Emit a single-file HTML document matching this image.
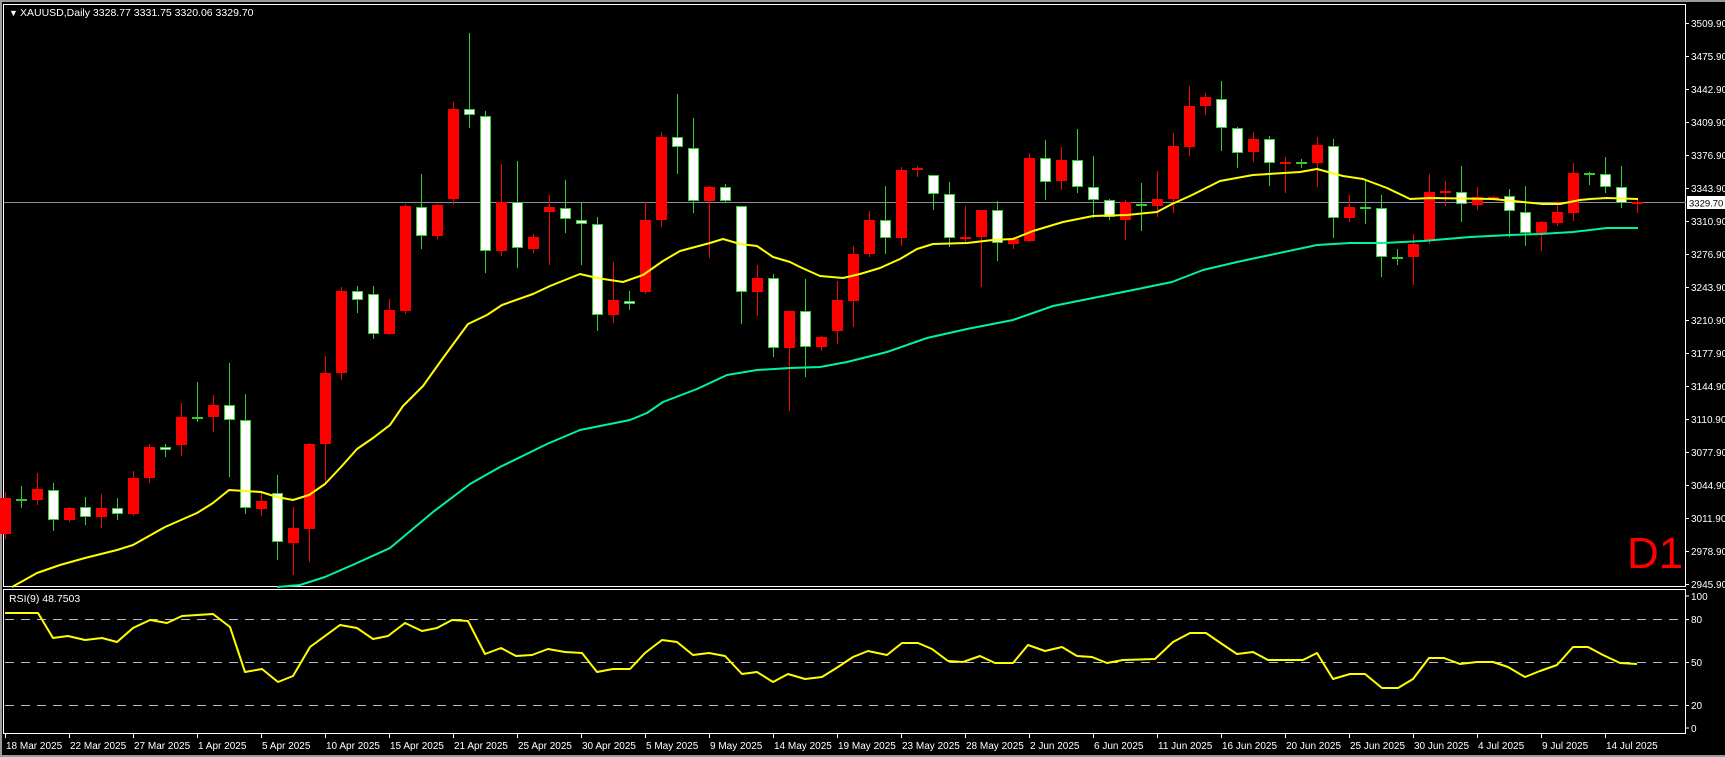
<!DOCTYPE html>
<html><head><meta charset="utf-8"><style>
html,body{margin:0;padding:0;background:#000;width:1725px;height:757px;overflow:hidden}
svg{display:block}
text{font-family:"Liberation Sans",sans-serif;font-size:10px;fill:#fff}
</style></head><body>
<svg id="s" width="1725" height="757" xmlns="http://www.w3.org/2000/svg">
<rect x="0" y="0" width="1725" height="757" fill="#000"/>
<rect x="0" y="0" width="1725" height="2" fill="#9a9a9a"/>
<rect x="0" y="755" width="1725" height="2" fill="#9a9a9a"/>
<rect x="0" y="0" width="2" height="757" fill="#9a9a9a"/>
<rect x="3.5" y="4.5" width="1682" height="582" fill="none" stroke="#fff" stroke-width="1"/>
<rect x="3.5" y="589.5" width="1682" height="144" fill="none" stroke="#fff" stroke-width="1"/>
<line x1="4" y1="202.5" x2="1686" y2="202.5" stroke="#8a8f99" stroke-width="1"/>
<g stroke="#bdbdbd" stroke-width="1" stroke-dasharray="9,7">
<line x1="5" y1="619.5" x2="1685" y2="619.5"/>
<line x1="5" y1="662.5" x2="1685" y2="662.5"/>
<line x1="5" y1="705.5" x2="1685" y2="705.5"/>
</g>
<g id="candles"></g>
<g id="lines"></g>
<text x="9" y="16" style="font-size:9px">&#9660;</text>
<text x="20" y="16" style="font-size:10.5px">XAUUSD,Daily  3328.77 3331.75 3320.06 3329.70</text>
<text x="9" y="602" style="font-size:10.5px">RSI(9) 48.7503</text>
<text x="1627" y="568" style="font-size:44px;fill:#ff0000">D1</text>
<g id="pax"></g>
<rect x="1687" y="196" width="38" height="13" fill="#fff"/>
<text x="1689" y="206.5" style="fill:#000;font-size:9.5px">3329.70</text>
<g>
<line x1="1686" y1="596" x2="1689" y2="596" stroke="#fff"/><text x="1691" y="600">100</text>
<line x1="1686" y1="619.5" x2="1689" y2="619.5" stroke="#fff"/><text x="1691" y="623">80</text>
<line x1="1686" y1="662.5" x2="1689" y2="662.5" stroke="#fff"/><text x="1691" y="666">50</text>
<line x1="1686" y1="705.5" x2="1689" y2="705.5" stroke="#fff"/><text x="1691" y="709">20</text>
<line x1="1686" y1="728" x2="1689" y2="728" stroke="#fff"/><text x="1691" y="732">0</text>
</g>
<g id="dates">
<text x="6" y="749">18 Mar 2025</text>
<text x="70" y="749">22 Mar 2025</text>
<text x="134" y="749">27 Mar 2025</text>
<text x="198" y="749">1 Apr 2025</text>
<text x="262" y="749">5 Apr 2025</text>
<text x="326" y="749">10 Apr 2025</text>
<text x="390" y="749">15 Apr 2025</text>
<text x="454" y="749">21 Apr 2025</text>
<text x="518" y="749">25 Apr 2025</text>
<text x="582" y="749">30 Apr 2025</text>
<text x="646" y="749">5 May 2025</text>
<text x="710" y="749">9 May 2025</text>
<text x="774" y="749">14 May 2025</text>
<text x="838" y="749">19 May 2025</text>
<text x="902" y="749">23 May 2025</text>
<text x="966" y="749">28 May 2025</text>
<text x="1030" y="749">2 Jun 2025</text>
<text x="1094" y="749">6 Jun 2025</text>
<text x="1158" y="749">11 Jun 2025</text>
<text x="1222" y="749">16 Jun 2025</text>
<text x="1286" y="749">20 Jun 2025</text>
<text x="1350" y="749">25 Jun 2025</text>
<text x="1414" y="749">30 Jun 2025</text>
<text x="1478" y="749">4 Jul 2025</text>
<text x="1542" y="749">9 Jul 2025</text>
<text x="1606" y="749">14 Jul 2025</text>
</g>
<g>
<text x="1691" y="27">3509.90</text>
<text x="1691" y="60">3475.90</text>
<text x="1691" y="93">3442.90</text>
<text x="1691" y="126">3409.90</text>
<text x="1691" y="159">3376.90</text>
<text x="1691" y="192">3343.90</text>
<text x="1691" y="225">3310.90</text>
<text x="1691" y="258">3276.90</text>
<text x="1691" y="291">3243.90</text>
<text x="1691" y="324">3210.90</text>
<text x="1691" y="357">3177.90</text>
<text x="1691" y="390">3144.90</text>
<text x="1691" y="423">3110.90</text>
<text x="1691" y="456">3077.90</text>
<text x="1691" y="489">3044.90</text>
<text x="1691" y="522">3011.90</text>
<text x="1691" y="555">2978.90</text>
<text x="1691" y="588">2945.90</text>
</g>
</svg>
<script>
var NS="http://www.w3.org/2000/svg";
function el(p,n,a){var e=document.createElementNS(NS,n);for(var k in a)e.setAttribute(k,a[k]);p.appendChild(e);return e;}
var pax=document.getElementById('pax');
[23,56,89,122,155,188,221,254,287,320,353,386,419,452,485,518,551,584].forEach(function(y){el(pax,'line',{x1:1686,y1:y+.5,x2:1689,y2:y+.5,stroke:'#fff'});});
var dg=document.getElementById('dates');
for(var k=0;k<26;k++){var x=5+64*k+.5;el(dg,'line',{x1:x,y1:734,x2:x,y2:738,stroke:'#fff'});}
var D=[
['r',482,517,476,521],['gd',483,483,470,491],['r',473,484,458,488],['w',474,503,468,513],['r',492,503,491,504],
['w',491,500,481,507],['r',492,500,478,510],['w',492,498,482,502],['r',463,498,456,499],['r',433,463,430,467],
['w',433,436,430,441],['r',404,431,390,440],['gd',404,404,370,408],['r',392,404,382,417],['w',392,407,351,461],
['w',407,492,381,497],['r',501,509,492,515,1],['w',493,542,475,559,1],['r',528,543,507,574,1],['r',444,529,443,561,1],
['r',361,430,345,468],['r',282,361,278,367],['w',282,290,277,302],['w',285,323,277,327],['r',300,323,289,323],
['r',199,301,197,303],['w',200,228,168,240],['r',198,228,197,230],['r',106,193,99,197],['w',106,111,32,123],
['w',112,243,107,263],['r',196,243,159,247],['w',196,240,156,258],['r',229,241,227,244],['r',200,205,189,256],
['w',201,212,174,225],['w',213,217,196,256],['w',217,305,210,319],['r',290,305,254,312],['w',291,294,282,299],
['r',213,283,196,284],['r',133,213,128,219],['w',133,142,91,167],['w',143,195,114,205],['r',181,195,180,249],
['w',181,195,178,196],['w',199,283,199,313],['r',269,283,257,305],['w',269,337,265,345],['r',301,337,301,397],
['w',301,336,270,364],['r',326,336,325,339],['r',290,320,272,332],['r',246,291,238,316],['r',213,246,204,248],
['w',213,230,180,245],['r',165,230,162,237],['r',163,165,161,170],['w',169,188,169,202],['w',188,230,176,238],
['r',229,231,199,233],['r',203,229,203,277],['w',203,235,195,252],['r',231,236,229,240],['r',153,233,148,233],
['w',153,176,136,193],['r',155,175,142,183],['w',155,181,125,186],['w',181,194,151,210],['w',194,210,193,212],
['r',196,213,194,231],['w',197,198,177,223],['r',193,199,166,209],['r',141,193,129,205],['r',103,142,83,150],
['r',94,103,90,110],['w',96,124,78,145],['w',124,148,123,162],['r',135,147,128,156],['w',135,158,132,179],
['rd',157,157,152,186],['gd',157,157,154,162],['r',140,158,133,180],['w',141,211,135,229],['r',200,211,189,214],
['gd',200,200,175,216],['w',201,249,189,267],['w',249,251,241,256],['r',236,249,227,275],['r',186,233,168,235],
['rd',185,185,175,198],['w',186,197,161,214],['r',191,198,181,202],['r',191,193,190,193],['w',190,204,183,228],
['w',205,226,180,237],['r',222,233,221,250,1],['r',212,223,201,225,1],['r',173,213,163,220,1],['gd',173,173,172,184,1],
['w',174,187,157,192,1],['w',187,203,166,207,1],['rd',202,202,200,212,1]
];
var cg=document.getElementById('candles');
D.forEach(function(c,i){
  var f=c[5]?1:1.033;
  var bt=Math.round(c[1]*f),bb=Math.round(c[2]*f),wt=Math.round(c[3]*f),wb=Math.round(c[4]*f);
  var x=5+16*i;
  var t=c[0];
  var col=(t=='r'||t=='rd')?'#ff0000':'#32cd32';
  el(cg,'line',{x1:x+.5,y1:wt,x2:x+.5,y2:wb+1,stroke:col,'stroke-width':1});
  if(t=='r'){el(cg,'rect',{x:x-5,y:bt,width:11,height:Math.max(1,bb-bt),fill:'#ff0000'});}
  else if(t=='w'){el(cg,'rect',{x:x-4.5,y:bt+.5,width:10,height:Math.max(1,bb-bt-1),fill:'#fff',stroke:'#32cd32','stroke-width':1});}
  else {el(cg,'rect',{x:x-5,y:bt,width:11,height:2,fill:col});}
});
var lg=document.getElementById('lines');
function pl(pts,col){el(lg,'polyline',{points:pts.map(function(p){return p.join(',')}).join(' '),fill:'none',stroke:col,'stroke-width':2,'stroke-linejoin':'round'});}
var Y=[[12,587],[37,573],[60,565],[85,558],[117,550],[133,545],[165,527],[197,513],[213,503],[229,490],[245,491],[261,492],[277,497],[293,500],[309,495],[325,484],[341,467],[357,449],[373,438],[390,425],[403,406],[423,386],[443,358],[468,324],[487,315],[502,305],[533,294],[550,286],[580,274],[597,278],[623,282],[643,275],[663,261],[680,251],[710,243],[723,239],[740,244],[757,246],[773,257],[790,262],[800,267],[820,276],[843,278],[860,274],[880,268],[900,259],[917,249],[933,244],[967,243],[993,240],[1013,239],[1033,231],[1063,222],[1093,216],[1127,215],[1157,212],[1172,204],[1190,196],[1220,181],[1253,175],[1300,172],[1317,169],[1343,176],[1363,179],[1387,188],[1410,199],[1430,198],[1493,199],[1523,202],[1543,204],[1560,204],[1580,200],[1590,199],[1607,198],[1638,199]];
var G=[[277,587],[300,585],[325,577],[357,563],[390,548],[433,512],[470,484],[500,467],[547,444],[580,430],[630,420],[647,413],[663,402],[697,389],[727,375],[757,370],[790,368],[820,367],[847,362],[887,352],[927,338],[967,329],[1013,320],[1053,306],[1093,298],[1133,290],[1172,282],[1203,270],[1237,262],[1270,255],[1317,245],[1350,243],[1383,243],[1423,241],[1470,237],[1510,235],[1540,234],[1573,232],[1607,228],[1638,228]];
var R=[[5,613],[38,613],[53,638],[68,636],[85,640],[102,638],[117,642],[133,628],[150,620],[167,623],[182,616],[213,614],[230,627],[245,672],[262,669],[278,682],[293,676],[310,647],[340,625],[357,628],[373,639],[388,636],[405,623],[422,631],[437,628],[452,620],[468,621],[485,654],[501,648],[516,656],[532,655],[548,649],[565,652],[582,653],[597,672],[613,669],[630,669],[645,653],[662,640],[677,642],[693,655],[709,653],[725,656],[742,674],[757,672],[773,682],[788,674],[805,679],[822,677],[838,667],[853,657],[868,651],[887,655],[902,643],[918,643],[932,649],[948,661],[963,662],[980,656],[995,663],[1013,663],[1028,645],[1045,651],[1062,647],[1077,656],[1092,657],[1107,663],[1123,660],[1155,659],[1173,642],[1190,633],[1206,633],[1222,644],[1237,654],[1253,652],[1268,660],[1303,660],[1317,653],[1333,679],[1350,674],[1365,674],[1382,688],[1398,688],[1413,679],[1429,658],[1444,658],[1460,664],[1477,662],[1493,662],[1508,667],[1525,677],[1540,671],[1557,665],[1573,647],[1588,647],[1603,655],[1620,663],[1637,664]];
pl(Y,'#ffff00');pl(G,'#00f59b');pl(R,'#ffff00');
</script>
</body></html>
